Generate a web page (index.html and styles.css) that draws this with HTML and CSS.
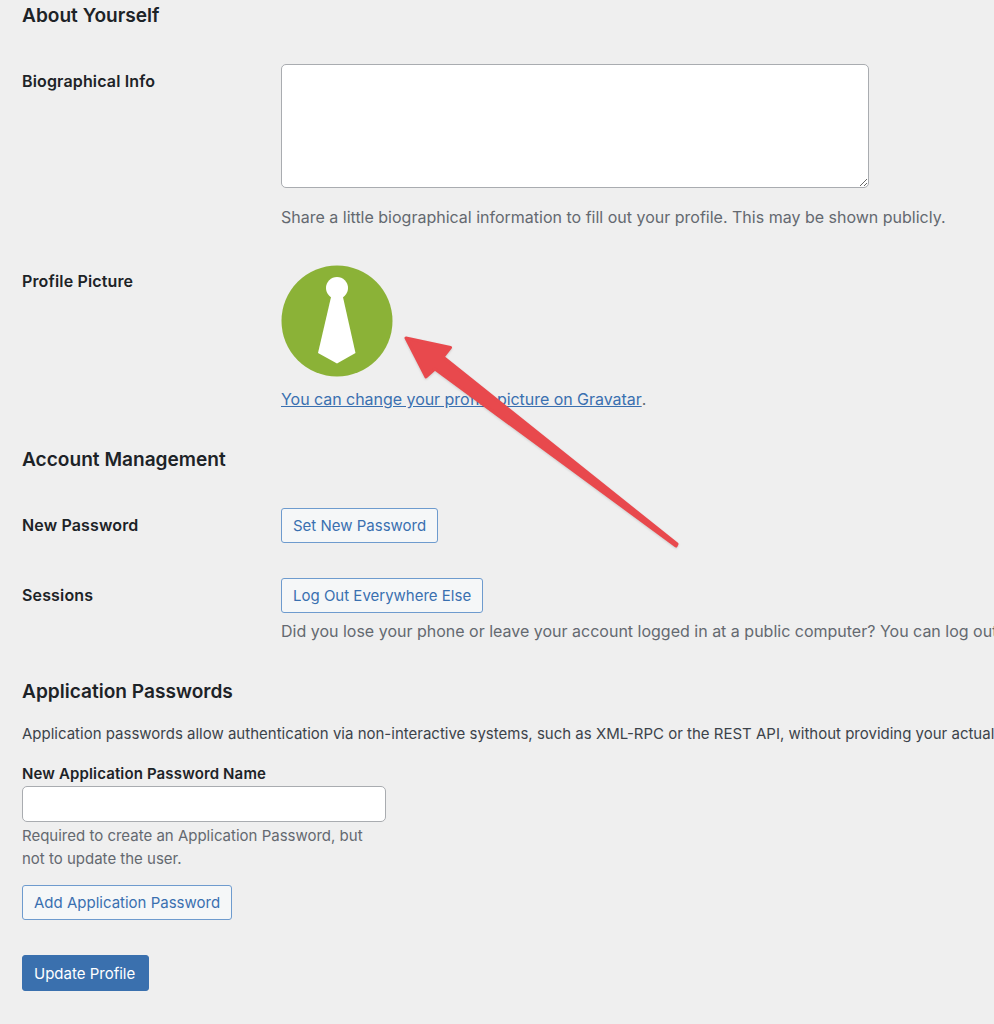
FILE: index.html
```html
<!DOCTYPE html>
<html lang="en">
<head>
<meta charset="utf-8">
<title>Profile</title>
<link rel="stylesheet" href="styles.css">
</head>
<body>
<form class="page">
  <h2 class="heading first">About Yourself</h2>
  <div class="row bio-row">
    <label class="label">Biographical Info</label>
    <div class="field">
      <textarea class="bio"></textarea>
      <p class="desc bio-desc">Share a little biographical information to fill out your profile. This may be shown publicly.</p>
    </div>
  </div>
  <div class="row pic-row">
    <label class="label">Profile Picture</label>
    <div class="field">
      <svg class="avatar" width="112" height="112" viewBox="0 0 112 112">
        <circle cx="56" cy="56" r="55.5" fill="#8bb237"/>
        <circle cx="56" cy="23" r="11" fill="#fff"/>
        <path d="M50.500 30h11l13 58-18.500 10.500L37 88z" fill="#fff"/>
      </svg>
      <p class="desc pic-desc"><a class="link" href="#">You can change your profile picture on Gravatar</a>.</p>
    </div>
  </div>
  <h2 class="heading account">Account Management</h2>
  <div class="row pass-row">
    <label class="label">New Password</label>
    <div class="field"><button type="button" class="btn">Set New Password</button></div>
  </div>
  <div class="row sessions-row">
    <label class="label">Sessions</label>
    <div class="field">
      <button type="button" class="btn">Log Out Everywhere Else</button>
      <p class="desc nowrap sessions-desc">Did you lose your phone or leave your account logged in at a public computer? You can log out everywhere else, and stay logged in here.</p>
    </div>
  </div>
  <h2 class="heading apps">Application Passwords</h2>
  <p class="intro nowrap">Application passwords allow authentication via non-interactive systems, such as XML-RPC or the REST API, without providing your actual password.</p>
  <label class="label block">New Application Password Name</label>
  <input class="text" type="text">
  <p class="note">Required to create an Application Password, but not to update the user.</p>
  <button type="button" class="btn add">Add Application Password</button>
  <div class="submit"><button type="button" class="btn primary">Update Profile</button></div>
</form>
<svg class="arrow" width="300" height="230" viewBox="0 0 300 230">
  <path d="M4 6 48.500 15.500 41 25 275 212 274 214 33 37 24 45z" fill="#e8494d" stroke="#e8494d" stroke-width="3" stroke-linejoin="round"/>
</svg>
</body>
</html>
```

FILE: styles.css
```css
* { box-sizing: border-box; }
html, body { margin: 0; height: 1024px; overflow: hidden; }
body {
  position: relative;
  background: #efefef;
  color: #3c434a;
  font-family: Inter, "Liberation Sans", sans-serif;
  font-size: 15px;
  line-height: 23px;
}
.page { padding: 0 0 0 22px; width: 994px; }
.heading { margin: 0; font-size: 19.100px; line-height: 24px; font-weight: 600; color: #1d2327; }
.first { padding-top: 3px; }
.row { display: flex; }
.label { width: 259px; flex: none; font-size: 16px; letter-spacing: .15px; font-weight: 600; color: #1d2327; }
.label.block { display: block; width: auto; margin-top: 17px; font-size: 15px; letter-spacing: .14px; }
.field { min-width: 0; }
.desc, .intro, .note { margin: 0; }
.desc { font-size: 16px; color: #646970; }
.nowrap { white-space: nowrap; }
.bio-row { margin-top: 37px; }
.bio-row .label { padding-top: 6px; }
.bio {
  display: block; width: 588px; height: 124px; margin: 0;
  background: #fff; border: 1px solid #a9acb0; border-radius: 5px;
}
.bio-desc { margin-top: 18px; }
.pic-row { margin-top: 41px; }
.avatar { display: block; margin-top: -5px; }
.pic-desc { margin-top: 11px; }
.link { color: #3a70b0; letter-spacing: -.04px; }
.account { margin-top: 36px; }
.pass-row { margin-top: 37px; }
.pass-row .label { padding-top: 6px; }
.btn {
  display: block; height: 35px; padding: 0 11px; margin: 0;
  font: inherit; color: #3a70b0; background: #f5f7f8;
  border: 1px solid #6e9bce; border-radius: 3px;
}
.sessions-row { margin-top: 35px; }
.sessions-row .label { padding-top: 6px; }
.sessions-desc { margin-top: 7px; }
.apps { margin-top: 36px; }
.intro { margin-top: 19px; }
.text {
  display: block; width: 364px; height: 36px; margin: 1px 0 0;
  background: #fff; border: 1px solid #a9acb0; border-radius: 5px;
}
.note { width: 364px; margin-top: 2px; color: #646970; }
.add { margin-top: 15px; }
.submit { margin-top: 35px; }
.primary { height: 36px; padding: 0 13px 0 11px; background: #3a70ae; border-color: #3a70ae; color: #fff; }
.arrow { position: absolute; left: 402px; top: 332px; pointer-events: none; filter: drop-shadow(0 1px 1px rgba(0, 0, 0, .15)); }
```
